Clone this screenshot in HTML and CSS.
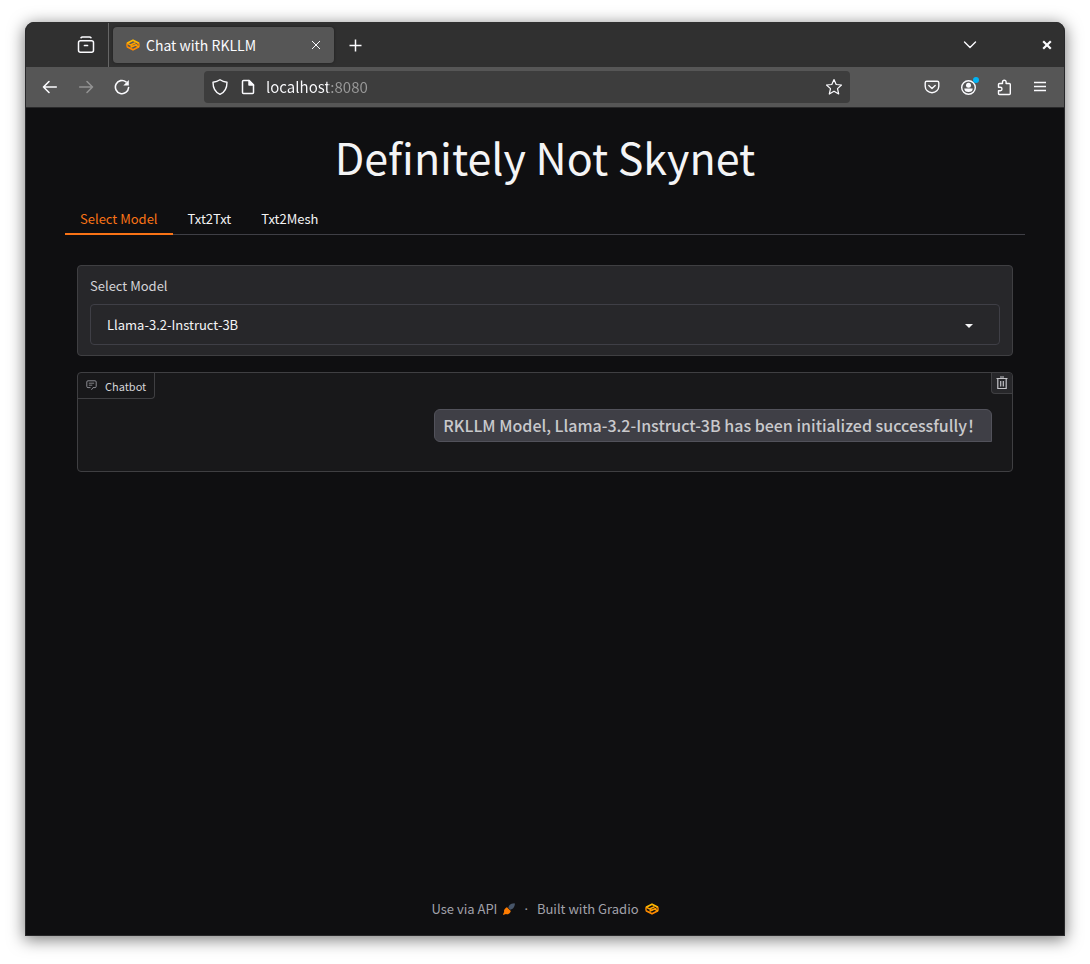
FILE: index.html
```html
<!DOCTYPE html>
<html lang="en">
<head>
<meta charset="utf-8">
<meta name="viewport" content="width=device-width, initial-scale=1">
<title>Chat with RKLLM</title>
<link rel="stylesheet" href="styles.css">
</head>
<body>
<svg class="defs" aria-hidden="true">
  <symbol id="gradio" viewBox="0 0 14 12">
    <path d="M1 7.800 7 10.800l6-3" fill="none" stroke="#ff8a00" stroke-width="1.800" stroke-linejoin="round"/>
    <path d="M1 4.200v3.600M13 4.200v3.600" stroke="#ff8a00" stroke-width="1.400"/>
    <path d="M1 4.200 7 1.200l6 3" fill="none" stroke="#ffb800" stroke-width="1.800" stroke-linejoin="round"/>
    <path d="M1 4.200 4.500 6 9.500 3.800" fill="none" stroke="#ffa200" stroke-width="1.500"/>
    <path d="M13 7.800 9.500 6 4.500 8.200" fill="none" stroke="#ffa200" stroke-width="1.500"/>
    <path d="M4.500 6 7 7.200 13 4.200" fill="none" stroke="#ff9500" stroke-width="1"/>
  </symbol>
</svg>
<div class="window">
  <header class="tabstrip">
    <button class="icon-btn tab-history" aria-label="Recent tabs">
      <svg width="18" height="18" viewBox="0 0 18 18" fill="none" stroke="currentColor" stroke-width="1.5" stroke-linecap="round"><path d="M4 1.700Q4.500 1 5.500 1h7q1 0 1.500.700"/><rect x="1.500" y="4.700" width="15" height="11.600" rx="2"/><path d="M7.500 9.500h3" stroke-width="1.700"/></svg>
    </button>
    <div class="browser-tab">
      <svg class="favicon" width="14" height="12"><use href="#gradio"/></svg>
      <span class="browser-tab-title">Chat with RKLLM</span>
      <button class="icon-btn tab-close" aria-label="Close tab">
        <svg width="10" height="10" viewBox="0 0 10 10" stroke="currentColor" stroke-width="1"><path d="m1 1 8 8M9 1 1 9"/></svg>
      </button>
    </div>
    <button class="icon-btn new-tab" aria-label="New tab">
      <svg width="14" height="14" viewBox="0 0 14 14" stroke="currentColor" stroke-width="1.500"><path d="M7.500 1.500v12M1.500 7.500h12"/></svg>
    </button>
    <div class="strip-end">
      <button class="icon-btn" aria-label="List all tabs">
        <svg width="14" height="8" viewBox="0 0 14 8" fill="none" stroke="currentColor" stroke-width="1.400" stroke-linecap="round" stroke-linejoin="round"><path d="m1.500 1 5.500 5.500L12.500 1"/></svg>
      </button>
      <button class="icon-btn close-window" aria-label="Close window">
        <svg width="10" height="10" viewBox="0 0 10 10" stroke="currentColor" stroke-width="2.200"><path d="m1.200 1.200 7.600 7.600M8.800 1.200 1.200 8.800"/></svg>
      </button>
    </div>
  </header>
  <nav class="toolbar" aria-label="Browser">
    <div class="nav-buttons">
      <button class="icon-btn" aria-label="Back">
        <svg width="16" height="16" viewBox="0 0 16 16" fill="none" stroke="currentColor" stroke-width="1.600" stroke-linecap="round" stroke-linejoin="round"><path d="M14.300 8H1.500M7 2.500 1.500 8 7 13.500"/></svg>
      </button>
      <button class="icon-btn" aria-label="Forward" disabled>
        <svg width="16" height="16" viewBox="0 0 16 16" fill="none" stroke="currentColor" stroke-width="1.600" stroke-linecap="round" stroke-linejoin="round"><path d="M1.700 8h12.800M9 2.500 14.500 8 9 13.500"/></svg>
      </button>
      <button class="icon-btn" aria-label="Reload">
        <svg width="16" height="16" viewBox="0 0 16 16" fill="none" stroke="currentColor" stroke-width="1.600" stroke-linecap="round"><path d="M14.600 8.500A6.600 6.600 0 1 1 12 2.800"/><path d="M14.800 1v5.500H9.300z" fill="currentColor" stroke="none"/></svg>
      </button>
    </div>
    <div class="urlbar">
      <svg width="16" height="16" viewBox="0 0 16 16" fill="none" stroke="currentColor" stroke-width="1.400" stroke-linejoin="round"><path d="M8 .800C6 2.200 3.500 3 1 3.200 1 9 2.500 13 8 15.300 13.500 13 15 9 15 3.200 12.500 3 10 2.200 8 .800z"/></svg>
      <svg width="16" height="16" viewBox="0 0 16 16" fill="none" stroke="currentColor" stroke-width="1.500" stroke-linejoin="round"><path d="M9 1.500H3.500q-1 0-1 1v11q0 1 1 1h9q1 0 1-1V6z"/><path d="M9 1.500V6h4.500z" fill="currentColor"/></svg>
      <input class="url" type="text" value="localhost:8080" aria-label="Address">
      <button class="icon-btn" aria-label="Bookmark this page">
        <svg width="18" height="18" viewBox="0 0 18 18" fill="none" stroke="currentColor" stroke-width="1.200" stroke-linejoin="round"><path d="m9 1.500 2.200 5 5.300.500-4 3.600 1.200 5.400L9 13.200 4.300 16l1.200-5.400-4-3.600 5.300-.500z"/></svg>
      </button>
    </div>
    <div class="tools">
      <button class="icon-btn" aria-label="Save to Pocket">
        <svg width="16" height="16" viewBox="0 0 16 16" fill="none" stroke="currentColor" stroke-width="1.400" stroke-linecap="round" stroke-linejoin="round"><path d="M2.700 2.200h10.600q1.500 0 1.500 1.500v3.500a6.800 6.600 0 0 1-13.600 0V3.700q0-1.500 1.500-1.500z"/><path d="M4.800 6.500 8 9.500l3.200-3"/></svg>
      </button>
      <button class="icon-btn account" aria-label="Account">
        <svg width="16" height="16" viewBox="0 0 16 16"><circle cx="8.500" cy="8.500" r="6.800" fill="none" stroke="currentColor" stroke-width="1.400"/><circle cx="8.500" cy="6.300" r="2.500" fill="currentColor"/><path d="M4.300 9.500h8.400q0 3.500-4.200 3.500t-4.200-3.500z" fill="currentColor"/></svg>
        <span class="account-dot"></span>
      </button>
      <button class="icon-btn" aria-label="Extensions">
        <svg width="16" height="17" viewBox="0 0 16 17" fill="none" stroke="currentColor" stroke-width="1.400" stroke-linejoin="round"><path d="M6.500 4.500V3a1.800 1.800 0 0 1 3.600 0v1.500h3.200q1 0 1 1V14.500q0 1-1 1H3.500q-1 0-1-1v-2.800h1.800a1.700 1.700 0 0 0 0-3.400H2.500V5.500q0-1 1-1z"/></svg>
      </button>
      <button class="icon-btn" aria-label="Menu">
        <svg width="16" height="16" viewBox="0 0 16 16" stroke="currentColor" stroke-width="1.300"><path d="M2 3.500h12M2 7.500h12M2 11.500h12"/></svg>
      </button>
    </div>
  </nav>

  <div class="page">
    <h1>Definitely Not Skynet</h1>
    <div class="tabs" role="tablist">
      <button class="tab selected" role="tab" aria-selected="true">Select Model</button>
      <button class="tab" role="tab" aria-selected="false">Txt2Txt</button>
      <button class="tab" role="tab" aria-selected="false">Txt2Mesh</button>
    </div>
    <main class="panel">
      <div class="block model">
        <label for="model">Select Model</label>
        <div class="select-wrap">
          <select id="model"><option>Llama-3.2-Instruct-3B</option></select>
          <svg class="caret" width="8" height="4" viewBox="0 0 8 4"><path d="M0 0h8L4 4z" fill="currentColor"/></svg>
        </div>
      </div>
      <section class="block chatbot" aria-label="Chatbot conversation">
        <div class="chat-head">
          <div class="chat-label">
            <svg width="11" height="11" viewBox="0 0 11 11" fill="none" stroke="currentColor"><path d="M5.500 9.800 7 7.600h2q1.200 0 1.200-1.200V2Q10.200.800 9 .800H2Q.800.800.800 2v4.400q0 1.200 1.200 1.200h2.500"/><path d="M2.800 3.200h5.400M2.800 5.200h3.500" stroke-width=".900"/></svg>
            <span>Chatbot</span>
          </div>
          <button class="clear" aria-label="Clear">
            <svg width="12" height="14" viewBox="0 0 12 14" fill="none" stroke="currentColor"><path d="M.500 2.500h11M4 1h4M1.800 3v9.500h8.400V3M4.700 5v5.500M7.300 5v5.500" stroke-width="1.200"/></svg>
          </button>
        </div>
        <p class="message">RKLLM Model, Llama-3.2-Instruct-3B has been initialized successfully！</p>
      </section>
    </main>
    <footer class="footer">
      <a class="api" href="#api">Use via API
        <svg width="12" height="12" viewBox="0 0 12 12"><path d="M0 12c.300-1.500.800-2.300 1.200-2.900C.300 6.800 2.500 4.800 4 4.200l3.800 3.800C7.300 10 5.300 11.900 3 10.900z" fill="#ff7c00"/><path d="m5.300 4.800.700-2C7.500.800 9.500.300 11.300.200l.600.500c-.100 2-.800 3.900-2.700 5.300l-2 .700z" fill="#475569"/></svg>
      </a>
      <span class="dot">·</span>
      <a href="#gradio-home">Built with Gradio
        <svg width="14" height="12"><use href="#gradio"/></svg>
      </a>
    </footer>
  </div>
</div>
</body>
</html>
```
FILE: styles.css
```css
* { box-sizing: border-box; }

body {
  margin: 0;
  min-height: 100vh;
  padding: 22px 25px 28px;
  display: flex;
  background: #fff;
  font-family: "Noto Sans CJK SC", sans-serif;
  font-size: 13px;
  line-height: 20px;
}

button, input, select { font: inherit; color: inherit; }
svg { display: block; flex: none; }
.defs { position: absolute; width: 0; height: 0; }

.window {
  flex: 1;
  min-width: 0;
  display: flex;
  flex-direction: column;
  border: 1px solid #28282a;
  border-top: 0;
  border-radius: 9px 9px 0 0;
  overflow: hidden;
  background: #0f0f11;
  box-shadow: 0 3px 16px 1px rgba(0, 0, 0, .5);
}

.icon-btn {
  display: flex;
  align-items: center;
  justify-content: center;
  width: 36px;
  height: 32px;
  padding: 0;
  border: 0;
  background: none;
  color: #fbfbfe;
}
.icon-btn:disabled { color: #929292; }

/* Browser chrome */
.tabstrip {
  display: flex;
  align-items: center;
  height: 45px;
  background: #303030;
  font-size: 14px;
}
.tab-history {
  width: 83px;
  height: 44px;
  align-self: flex-end;
  padding-left: 38px;
  border-right: 1px solid #666;
}
.browser-tab {
  display: flex;
  align-items: center;
  width: 221px;
  height: 36px;
  margin: 0 4px;
  padding: 0 6px 0 13px;
  gap: 6px;
  border-radius: 4px;
  background: #565656;
  color: #fbfbfe;
  box-shadow: 0 0 3px rgba(0, 0, 0, .4);
}
.browser-tab-title { flex: 1; white-space: nowrap; }
.tab-close { width: 24px; height: 24px; }
.new-tab { width: 34px; }
.strip-end { display: flex; gap: 42px; margin-left: auto; }
.close-window { width: 34px; }
.toolbar {
  display: flex;
  align-items: center;
  height: 41px;
  padding: 0 6px;
  background: #565656;
  border-bottom: 1px solid #29292a;
}
.nav-buttons, .tools { display: flex; }
.urlbar {
  flex: 1;
  min-width: 0;
  display: flex;
  align-items: center;
  height: 32px;
  margin: 0 64px;
  padding-left: 8px;
  gap: 12px;
  border-radius: 4px;
  background: #3d3d3d;
  color: #fbfbfe;
}
.urlbar .icon-btn { width: 32px; }
.url {
  flex: 1;
  min-width: 0;
  height: 24px;
  margin-left: -2px;
  padding: 0 0 2px;
  border: 0;
  font-size: 15px;
  color: transparent;
  caret-color: #fbfbfe;
  background: linear-gradient(to right, #fbfbfe 62px, #9a9a9a 62px);
  background-clip: text;
  -webkit-background-clip: text;
}
.account { position: relative; }
.account-dot {
  position: absolute;
  top: 6px;
  right: 7px;
  width: 6px;
  height: 6px;
  border-radius: 50%;
  background: #00b3f4;
}

/* Page */
.page {
  flex: 1;
  display: flex;
  flex-direction: column;
  padding: 18px 39px 16px;
}
h1 {
  margin: 0 0 18px;
  font-size: 43px;
  line-height: 60px;
  font-weight: 400;
  text-align: center;
  color: #f4f4f5;
}
.tabs { display: flex; border-bottom: 1px solid #3f3f46; }
.tab {
  height: 31px;
  margin-bottom: -1px;
  padding: 0 15px;
  border: 0;
  border-bottom: 2px solid transparent;
  background: none;
  color: #f4f4f5;
}
.tab.selected { color: #f97316; border-color: #f97316; }
.panel {
  display: flex;
  flex-direction: column;
  gap: 16px;
  padding: 30px 12px 0;
}
.block {
  border: 1px solid #3f3f42;
  border-radius: 4px;
  background: #18181a;
}
.model {
  display: flex;
  flex-direction: column;
  gap: 8px;
  padding: 10px 12px;
  background: #27272a;
  color: #d4d4d8;
}
.select-wrap { position: relative; }
.select-wrap select {
  display: block;
  width: 100%;
  height: 41px;
  padding: 0 16px;
  border: 1px solid #3f3f46;
  border-radius: 4px;
  appearance: none;
  background: #27272a;
  color: #f4f4f5;
}
.caret {
  position: absolute;
  top: 20px;
  right: 27px;
  color: #f4f4f5;
  pointer-events: none;
}
.chatbot {
  display: flex;
  flex-direction: column;
  min-height: 100px;
}
.chat-head {
  display: flex;
  justify-content: space-between;
  align-items: flex-start;
}
.chat-label {
  display: flex;
  align-items: center;
  gap: 8px;
  height: 26px;
  padding: 0 8px;
  border: solid #3f3f42;
  border-width: 0 1px 1px 0;
  border-radius: 0 0 4px 0;
  font-size: 11px;
  line-height: 16px;
  color: #d4d4d8;
}
.chat-label svg { color: #8b8b92; }
.clear {
  display: flex;
  align-items: center;
  justify-content: center;
  width: 21px;
  height: 21px;
  padding: 0;
  border: solid #3f3f42;
  border-width: 0 0 1px 1px;
  border-radius: 0 4px 0 4px;
  background: #27272a;
  color: #c4c4c8;
}
.message {
  align-self: flex-end;
  margin: 10px 20px 0;
  padding: 4px 8px 5px;
  border: 1px solid #52525b;
  border-radius: 6px 6px 0 6px;
  background: #3f3f46;
  color: #c9c9cc;
  font-size: 16px;
  line-height: 22px;
  font-weight: 500;
}
.footer {
  display: flex;
  justify-content: center;
  gap: 9px;
  margin-top: auto;
  color: #a1a1aa;
}
.footer a {
  display: flex;
  align-items: center;
  gap: 6px;
  color: inherit;
  text-decoration: none;
}
.dot { font-family: "Noto Sans", sans-serif; }
```
